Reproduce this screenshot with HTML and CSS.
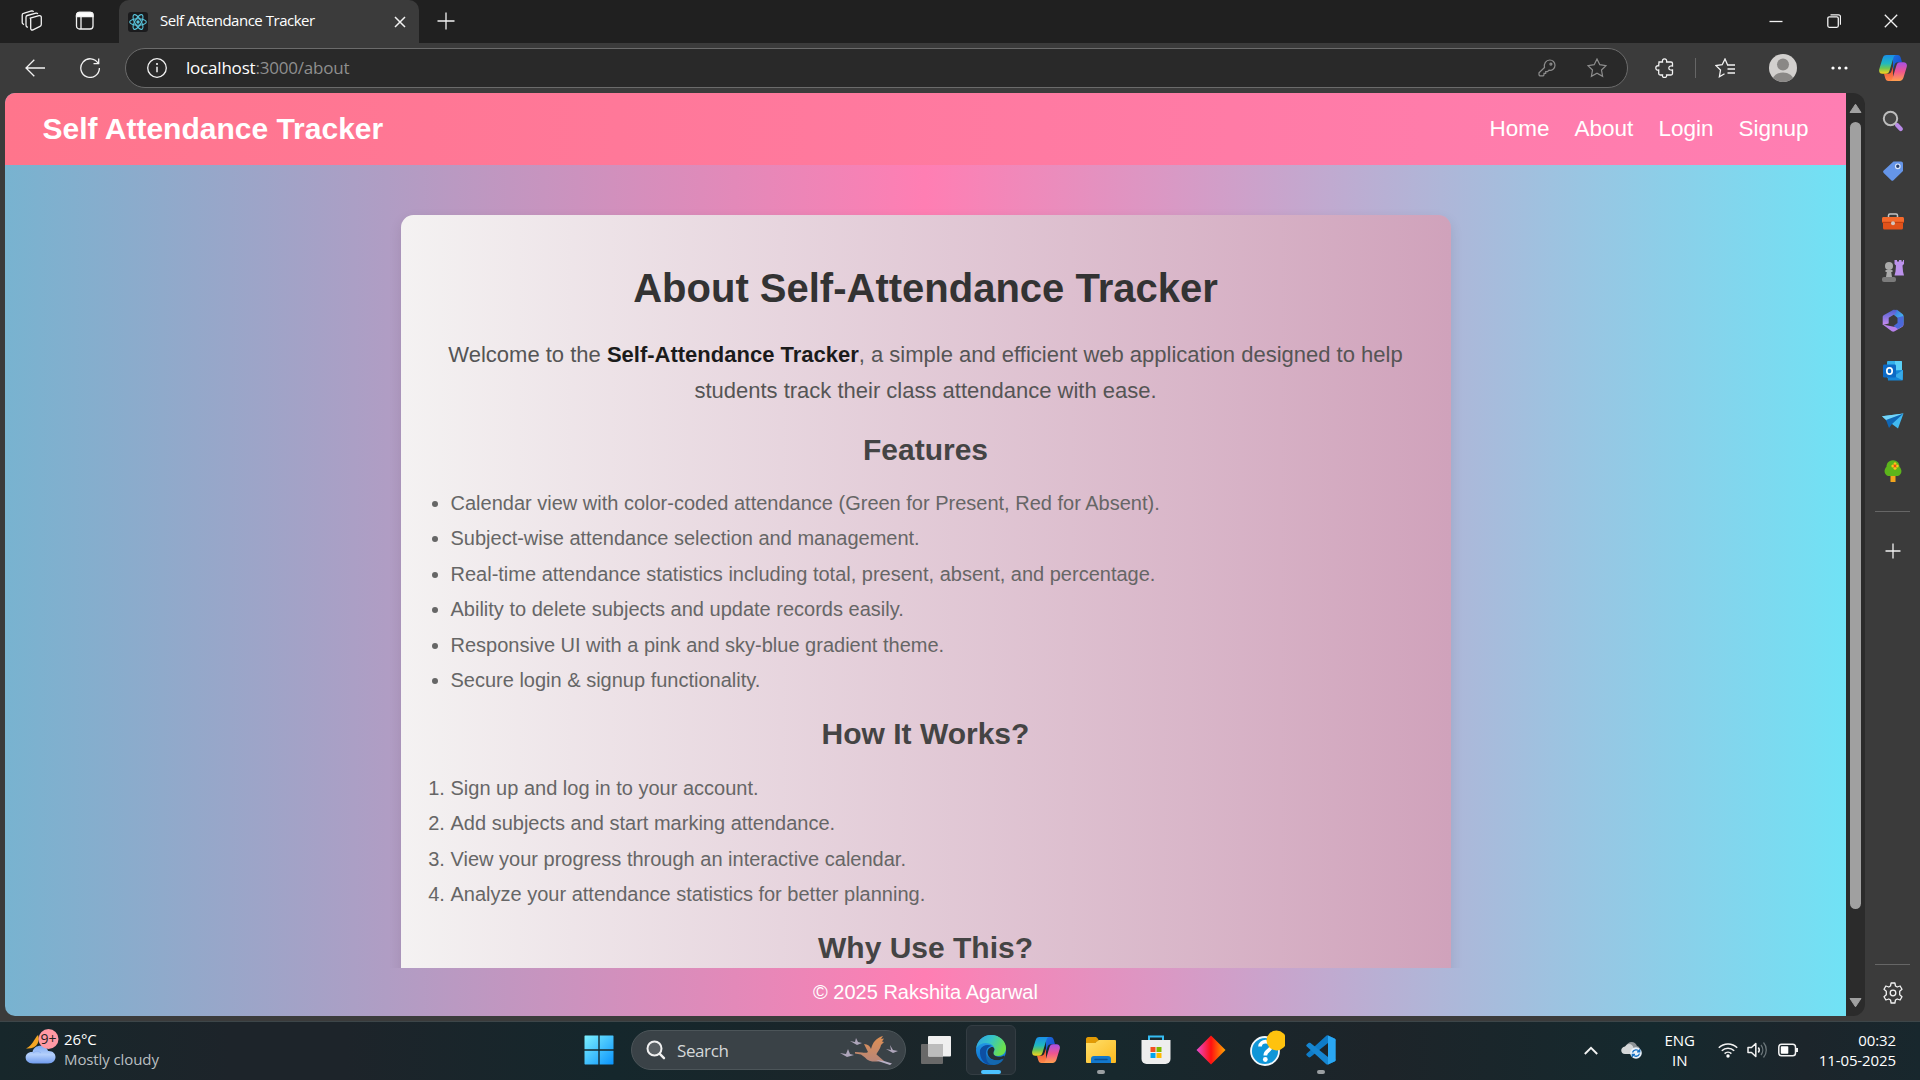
FILE: index.html
```html
<!DOCTYPE html>
<html lang="en">
<head>
<meta charset="utf-8">
<title>Self Attendance Tracker</title>
<link rel="stylesheet" href="styles.css">
</head>
<body>
<svg width="0" height="0" class="defs" aria-hidden="true">
  <defs>
    <linearGradient id="cpA" x1="0" y1="0" x2="0" y2="1"><stop offset="0" stop-color="#1a8fe8"/><stop offset=".45" stop-color="#20b8c0"/><stop offset=".7" stop-color="#6cc655"/><stop offset="1" stop-color="#ffd21c"/></linearGradient>
    <linearGradient id="cpB" x1="0" y1="0" x2="0" y2="1"><stop offset="0" stop-color="#a650e6"/><stop offset=".5" stop-color="#f0558f"/><stop offset="1" stop-color="#ffa04d"/></linearGradient>
    <linearGradient id="cpC" x1="0" y1="0" x2="1" y2="1"><stop offset="0" stop-color="#1b6fe0"/><stop offset="1" stop-color="#1747c9"/></linearGradient>
    <linearGradient id="cpD" x1="0" y1="0" x2="0" y2="1"><stop offset="0" stop-color="#e8402f"/><stop offset="1" stop-color="#ff8a4a"/></linearGradient>
    <linearGradient id="win" x1="0" y1="0" x2="1" y2="1"><stop offset="0" stop-color="#7cf0ff"/><stop offset="1" stop-color="#0a93fb"/></linearGradient>
    <linearGradient id="edgeG" x1="0" y1="0" x2="1" y2=".4"><stop offset="0" stop-color="#2f9fe6"/><stop offset=".5" stop-color="#35c3c8"/><stop offset="1" stop-color="#6be04c"/></linearGradient>
    <linearGradient id="edgeB" x1="0" y1="0" x2="0" y2="1"><stop offset="0" stop-color="#2aa5ea"/><stop offset="1" stop-color="#0b6dd0"/></linearGradient>
    <linearGradient id="dia" x1="0" y1="0" x2="1" y2="0"><stop offset="0" stop-color="#e84bd0"/><stop offset=".5" stop-color="#ff1010"/><stop offset="1" stop-color="#ffa800"/></linearGradient>
    <linearGradient id="fold" x1="0" y1="0" x2="1" y2="1"><stop offset="0" stop-color="#ffdf6b"/><stop offset="1" stop-color="#fcb91e"/></linearGradient>
    <linearGradient id="cloud" x1="0" y1="0" x2="0" y2="1"><stop offset="0" stop-color="#7fa9f2"/><stop offset=".5" stop-color="#b4d0fb"/><stop offset="1" stop-color="#6f9bee"/></linearGradient>
    <linearGradient id="hexA" x1="0" y1="0" x2="1" y2="1"><stop offset="0" stop-color="#3d63d8"/><stop offset="1" stop-color="#49d0f5"/></linearGradient>
    <linearGradient id="hexB" x1="0" y1="0" x2="0" y2="1"><stop offset="0" stop-color="#4c5fd0"/><stop offset="1" stop-color="#c98cf0"/></linearGradient>
    <linearGradient id="bird" x1="0" y1="0" x2="0" y2="1"><stop offset="0" stop-color="#e08f52"/><stop offset="1" stop-color="#b78678"/></linearGradient>
    <symbol id="copilot" viewBox="0 0 28 26">
      <path d="M14 0h4.500c2 0 2.700 1 3.300 3l1.200 4.200h-4c-2 0-3 1-3.600 3l-1.400 4.500z" fill="url(#cpC)"/>
      <path d="M14 26H9.500c-2 0-2.700-1-3.300-3L5 18.800h4c2 0 3-1 3.600-3l1.400-4.500z" fill="url(#cpD)"/>
      <path d="M7.500 0H17c-1.600.3-2.200 1.600-2.700 3.200l-3.800 12.600c-.6 2-1.600 3-3.600 3H3.500C.6 18.800-.4 16.300.3 14L3.500 3.400C4.200 1.200 5.400 0 7.500 0z" fill="url(#cpA)"/>
      <path d="M20.500 26H11c1.600-.3 2.200-1.600 2.700-3.200l3.800-12.600c.6-2 1.600-3 3.600-3h3.400c2.900 0 3.900 2.500 3.200 4.800l-3.200 10.600c-.7 2.200-1.900 3.400-4 3.400z" fill="url(#cpB)"/>
    </symbol>
  </defs>
</svg>

<header class="tabbar">
  <span class="slot tb-work"><svg width="22" height="22" viewBox="0 0 22 22" class="line"><path d="M9.300 8.200 18 5.700c1-.3 2 .2 2.300 1.200v7.400c0 1-.4 1.700-1.300 2.100l-7 3.400c-1.300.5-2.300 0-2.300-1.200V9.300zM6.800 17.500l-.9-.6c-.7-.4-.9-.9-.9-1.600V7.200c0-.8.500-1.500 1.300-1.700l8.700-2.300c.8-.2 1.400.1 1.800.8M3 14.600l-.9-.6c-.7-.4-.9-.9-.9-1.600V5.100c0-.8.500-1.500 1.300-1.700L10.600 1c.8-.2 1.500.1 1.900.9"/></svg></span>
  <span class="slot tb-tabs"><svg width="20" height="20" viewBox="0 0 20 20" class="line"><rect x="1.500" y="1.500" width="16.500" height="16.500" rx="3"/><path d="M6 5v13"/><path d="M1.500 5.500V4a2.500 2.500 0 0 1 2.500-2.500h11.500A2.500 2.500 0 0 1 18 4v1.500z" class="white"/></svg></span>
  <div class="tab">
    <svg width="20" height="20" viewBox="0 0 20 20" class="react"><rect width="20" height="20" rx="3" fill="#1b1b1d"/><g fill="none" stroke="#58c4dc" stroke-width="1.100"><ellipse cx="10" cy="10" rx="8.300" ry="3.200"/><ellipse cx="10" cy="10" rx="8.300" ry="3.200" transform="rotate(60 10 10)"/><ellipse cx="10" cy="10" rx="8.300" ry="3.200" transform="rotate(120 10 10)"/></g><circle cx="10" cy="10" r="1.700" fill="#58c4dc"/></svg>
    <span class="tab-title">Self Attendance Tracker</span>
    <svg width="12" height="12" viewBox="0 0 12 12" class="line"><path d="m1 1 10 10M11 1 1 11" stroke-width="1.500"/></svg>
  </div>
  <span class="slot tb-new"><svg width="18" height="18" viewBox="0 0 18 18" class="line"><path d="M9 .5v17M.5 9h17"/></svg></span>
  <div class="winbtns">
    <span class="slot"><svg width="14" height="14" viewBox="0 0 14 14" class="line"><path d="M.5 7.500h13"/></svg></span>
    <span class="slot"><svg width="14" height="14" viewBox="0 0 14 14" class="line"><rect x=".8" y="2.800" width="10.500" height="10.500" rx="1.500"/><path d="M3.500.8h8a2 2 0 0 1 2 2v8"/></svg></span>
    <span class="slot"><svg width="14" height="14" viewBox="0 0 14 14" class="line"><path d="m.8.800 12.400 12.400M13.200.8.800 13.200"/></svg></span>
  </div>
</header>

<div class="toolbar">
  <span class="slot nav-back"><svg width="20" height="18" viewBox="0 0 20 18" class="line"><path d="M20 9H1M9.300.7 1 9l8.300 8.300"/></svg></span>
  <span class="slot nav-reload"><svg width="20" height="20" viewBox="0 0 20 20" class="line"><path d="M18.200 5.500A9.300 9.300 0 1 0 19.400 10M18.700.5v5.200h-5.200"/></svg></span>
  <div class="address">
    <svg width="20" height="20" viewBox="0 0 20 20" class="line"><circle cx="10" cy="10" r="9.300"/><path d="M10 8.800v5.400" stroke-width="1.500"/><circle cx="10" cy="6" r="1" class="white" stroke="none"/></svg>
    <span class="url"><b>localhost</b>:3000/about</span>
    <svg width="18" height="18" viewBox="0 0 18 18" class="dim key"><path d="M6.500 8.500C5.700 4.800 7.800 1 11.800 1A5.200 5.200 0 0 1 17 6.200c0 3.600-3 5.600-6 5L9.400 12.700H7.700v1.700H6v1.500l-.8.900H1.800l-.8-.9v-2.200z"/><circle cx="12.900" cy="5.100" r="1"/></svg>
    <svg width="20" height="20" viewBox="0 0 20 20" class="dim"><path d="m10 1 2.800 5.700 6.200.9-4.500 4.400 1.100 6.300L10 15.300l-5.600 3 1.100-6.300L1 7.600l6.200-.9z"/></svg>
  </div>
  <div class="tools">
    <svg width="20" height="20" viewBox="0 0 20 20" class="line t-ext"><path d="M4 4h3.500C7.200 2 8 .8 9.500.8S11.900 2 11.600 4H16c1 0 1.500.5 1.500 1.500V8c-2-.4-3.700.3-3.700 2s1.700 2.400 3.700 2v3.500c0 1-.5 1.500-1.500 1.500h-4.400c.3 1.500-.5 2.500-2.100 2.500S7.200 18.500 7.500 17H5.200C4.200 17 3.700 16.500 3.700 15.500V12C2 12.300.8 11.500.8 9.900S2 7.500 3.700 7.800z"/></svg>
    <i class="sep"></i>
    <svg width="20" height="20" viewBox="0 0 20 20" class="line t-fav"><path d="M12.500 6.700 10 1 7.200 6.700 1 7.600l4.500 4.400-1.100 6.700 5.100-3M12 7h8M12.500 11h7.500M12.500 15h7.500"/></svg>
    <svg width="28" height="28" viewBox="0 0 28 28" class="t-user"><defs><clipPath id="pc"><circle cx="14" cy="14" r="14"/></clipPath></defs><circle cx="14" cy="14" r="14" fill="#d2d0ce"/><g clip-path="url(#pc)" fill="#8a8886"><circle cx="14" cy="10.500" r="6"/><ellipse cx="14" cy="26" rx="10.500" ry="7.500"/></g></svg>
    <svg width="17" height="4" viewBox="0 0 17 4" class="t-more"><g fill="#fff"><circle cx="2" cy="2" r="1.600"/><circle cx="8.500" cy="2" r="1.600"/><circle cx="15" cy="2" r="1.600"/></g></svg>
    <svg width="28" height="26"><use href="#copilot"/></svg>
  </div>
</div>

<div class="content">
  <div class="page">
    <nav class="navbar">
      <div class="brand">Self Attendance Tracker</div>
      <div class="links"><a>Home</a><a>About</a><a>Login</a><a>Signup</a></div>
    </nav>
    <main class="main">
      <article class="card">
        <h1>About Self-Attendance Tracker</h1>
        <p>Welcome to the <strong>Self-Attendance Tracker</strong>, a simple and efficient web application designed to help students track their class attendance with ease.</p>
        <h2>Features</h2>
        <ul>
          <li>Calendar view with color-coded attendance (Green for Present, Red for Absent).</li>
          <li>Subject-wise attendance selection and management.</li>
          <li>Real-time attendance statistics including total, present, absent, and percentage.</li>
          <li>Ability to delete subjects and update records easily.</li>
          <li>Responsive UI with a pink and sky-blue gradient theme.</li>
          <li>Secure login &amp; signup functionality.</li>
        </ul>
        <h2>How It Works?</h2>
        <ol>
          <li>Sign up and log in to your account.</li>
          <li>Add subjects and start marking attendance.</li>
          <li>View your progress through an interactive calendar.</li>
          <li>Analyze your attendance statistics for better planning.</li>
        </ol>
        <h2>Why Use This?</h2>
      </article>
    </main>
    <footer class="footer">© 2025 Rakshita Agarwal</footer>
  </div>
  <div class="scrollbar">
    <svg width="13" height="11" viewBox="0 0 13 11"><path d="M6.500 1.200 12 9.500H1z" fill="#a0a0a0" stroke="#a0a0a0" stroke-linejoin="round"/></svg>
    <i class="thumb"></i>
    <svg width="13" height="11" viewBox="0 0 13 11"><path d="M6.500 9.800 12 1.500H1z" fill="#a0a0a0" stroke="#a0a0a0" stroke-linejoin="round"/></svg>
  </div>
  <aside class="side">
    <span class="app"><svg width="22" height="22" viewBox="0 0 22 22"><path d="m15 15 3.800 4" stroke="#b98ae8" stroke-width="4.200" stroke-linecap="round"/><circle cx="8.500" cy="8.500" r="6.700" fill="#454545" stroke="#bdbdbd" stroke-width="2"/></svg></span>
    <span class="app"><svg width="22" height="22" viewBox="0 0 22 22"><path d="M11.500 1.500H19a2 2 0 0 1 2 2V11L11.500 20.300c-.8.700-1.600.7-2.300 0L1.700 13c-.8-.8-.8-1.600 0-2.400z" fill="#6595e8"/><circle cx="15.800" cy="6.300" r="2.300" fill="#27406e" stroke="#dce8fb" stroke-width="1.200"/></svg></span>
    <span class="app"><svg width="22" height="22" viewBox="0 0 22 22"><path d="M6.500 7.500v-2c0-1 .5-1.500 1.500-1.500h6c1 0 1.500.5 1.500 1.500v2" fill="none" stroke="#c5c5c5" stroke-width="1.500"/><path d="M1 9.500h20V18a1.500 1.500 0 0 1-1.500 1.500h-17A1.500 1.500 0 0 1 1 18z" fill="#e0521a"/><path d="M0 8.500C0 7.600.6 7 1.500 7h19c.9 0 1.500.6 1.500 1.500v4H0z" fill="#f4692b"/><path d="M0 12.300h22" stroke="#b83c10"/><circle cx="11" cy="13.300" r="2" fill="#d2c5bd"/></svg></span>
    <span class="app"><svg width="22" height="22" viewBox="0 0 22 22"><path d="M12.500 0H15v1.500h2V0h2.500v1.500H21V0h1v4l-1.500 1.500.5 6 1 4h-9.500l1-4 .5-6L12.500 4z" fill="#bc92ec"/><g fill="#aaa"><circle cx="7" cy="6" r="4"/><path d="M3.500 10h7v2H9.200l.8 5H4l.8-5H3.500z"/></g><rect y="17" width="14" height="5" rx="2" fill="#7b7b7b"/></svg></span>
    <span class="app"><svg width="22" height="24" viewBox="0 0 22 24"><path d="M10 2 15 .8l5.500 4.200c.7.500 1 1.200 1 2v6.500L12 6z" fill="url(#hexA)"/><path d="M11.500.8 2 6C1 6.700.7 7.300.7 8v8l6-1.500V8.800L13 5l2-4z" fill="url(#hexB)"/><path d="m.7 15.500 9 6.800c1 .6 2 .6 3 0L20 18c1-.7 1.500-1.500 1.500-2.500V13L13 18z" fill="#b780ea"/><path d="m21.500 7-6 1.500V14l-4 3 4.500 3 4.500-2.700c.7-.5 1-1.200 1-2z" fill="#4a69d9"/></svg></span>
    <span class="app"><svg width="20" height="20" viewBox="0 0 20 20"><rect x="4" width="15" height="17" rx="1" fill="#35b0ea"/><path d="M12 0h6a1 1 0 0 1 1 1v8h-7z" fill="#5ad0f7"/><path d="M4 10.500 20 9v9a1.500 1.500 0 0 1-1.500 1.500H5z" fill="#1485d8"/><path d="m20 9-9 6 8.500 4.300z" fill="#38aae8"/><rect y="3.500" width="13" height="13" rx="1.200" fill="#0d6ac5"/><ellipse cx="6.500" cy="10" rx="2.700" ry="3.200" fill="none" stroke="#fff" stroke-width="1.700"/></svg></span>
    <span class="app"><svg width="22" height="16" viewBox="0 0 22 16"><path d="M0 3.200 21.500.5 16 15.500 10 11z" fill="#41b9f0"/><path d="M0 3.200 21.500.5 6 9z" fill="#73d5fa"/><path d="M4 7 21.500.5 10 11l-3 4z" fill="#1067b5"/></svg></span>
    <span class="app"><svg width="18" height="22" viewBox="0 0 18 22"><rect x="6.500" y="14" width="5" height="8" fill="#f3a51c"/><path d="M9 .3c5 0 6.500 4 6.500 6.500 3 3 2.500 8-1.500 9.200H4C0 14.800-.5 9.800 2.500 6.800 2.500 4.300 4 .3 9 .3z" fill="#5cb51b"/><g fill="#ffc21a"><circle cx="11" cy="3.800" r="1.500"/><circle cx="11" cy="8.200" r="1.500"/><circle cx="8.800" cy="6" r="1.500"/><circle cx="13.200" cy="6" r="1.500"/></g><circle cx="11" cy="6" r="1.400" fill="#ec4f12"/></svg></span>
    <i class="rule"></i>
    <span class="app add"><svg width="16" height="16" viewBox="0 0 16 16" class="line"><path d="M8 .5v15M.5 8h15"/></svg></span>
    <i class="rule low"></i>
    <span class="app gear"><svg width="22" height="22" viewBox="0 0 22 22" class="line"><path d="m9.100 1-.6 3-1.700 1-2.900-1L2 7.300l2.300 2v3.400l-2.300 2L3.900 18l2.900-1 1.700 1 .6 3h3.800l.6-3 1.700-1 2.900 1 1.900-3.300-2.300-2V9.300l2.300-2L18.100 4l-2.900 1-1.700-1-.6-3z" stroke-linejoin="round"/><circle cx="11" cy="11" r="2.800"/></svg></span>
  </aside>
</div>

<div class="taskbar">
  <div class="weather">
    <svg width="36" height="38" viewBox="0 0 36 38"><path d="M14 7c2.500 5.500-.5 14.500-12 13.500C8.500 17.500 10 11 14 7z" fill="#f5a623"/><path d="M9 35.500c-10 0-9.500-12-.5-11.500 1.500-8.500 14-8 15.500-1 10-.5 10 12.500 0 12.500z" fill="url(#cloud)"/><path d="M9 25c3-2.500 6-2 8 0" stroke="#8fb4f5" fill="none"/><circle cx="24.500" cy="11" r="10" fill="#ff99a4"/><text x="24.500" y="16" text-anchor="middle" class="badge-text">9+</text></svg>
    <div class="two"><span>26°C</span><span class="muted">Mostly cloudy</span></div>
  </div>
  <div class="center">
    <span class="task"><svg width="30" height="30" viewBox="0 0 30 30"><path d="M1 .5h13.300v13.700H.5V1zM15.700.5H29l.5.500v13.200H15.700zM.5 15.700h13.800v13.800H1l-.5-.5zM15.700 15.700h13.800V29l-.5.500H15.700z" fill="url(#win)"/></svg></span>
    <div class="search">
      <svg width="20" height="20" viewBox="0 0 20 20"><circle cx="8.500" cy="8.500" r="7" fill="#5a6064" stroke="#f0f0f0" stroke-width="2"/><path d="m13.800 13.800 4.200 4.400" stroke="#f0f0f0" stroke-width="2.400" stroke-linecap="round"/></svg>
      <span>Search</span>
      <svg width="60" height="32" viewBox="0 0 60 32"><path d="m17 18 7 .5c3 .5 4.500.5 6-.5l-4-8c4 .5 6 2 7 5 2-7 5-11 12-13l-2 3 3-.5-2 3 2 .5-3 3c-1 5-4 7-4.500 9.500L46 27l-6 .5c-6 .5-10-.5-13-4l-4-3-6-1z" fill="url(#bird)"/><path d="m38 26 8 1 8 2.500-2 1.500-9-3z" fill="#b9b0c6"/><g fill="#aea5ba"><path d="m12 7 5 1 1-4 2 4 4 1-5 2z"/><path d="m2 19 6 1 2-5 2 5 4 1-7 2z"/><path d="m48 15 5 1-1-5 3 5 5 1-5 2z"/></g></svg>
    </div>
    <span class="task"><svg width="32" height="30" viewBox="0 0 32 30"><rect x="1" y="9" width="22" height="20" rx="1" fill="#696969"/><rect x="8" y="1" width="23" height="20.500" rx="1" fill="#f0f0f0"/><path d="M8 9h15v12.500H9l-1-1z" fill="#bcbcbc"/></svg></span>
    <span class="task active"><svg width="30" height="30" viewBox="0 0 30 30"><circle cx="15" cy="15" r="15" fill="url(#edgeB)"/><path d="M10 19c0-5 2-7.500 6-8-4-2-10-1-12 4C3 24 9 30 16 30c5 0 9-2.500 11.500-6C21 27 11 27 10 19z" fill="#0d4fa3"/><path d="M.3 13C1.300 5.500 7.500 0 15 0c9 0 15 6.500 15 13 0 5-3.500 8-8 8-3 0-5-1.500-5-2.500s1.500-1.500 1.500-4C18.500 8 6 4.500.3 13z" fill="url(#edgeG)"/><path d="M17.500 18c0 4 7 5 10.500 2.500 1 0 1 1-.5 3C22 27 12 25.500 11.500 17.500c0-4 4-6.500 6-5 2 2 0 3.500 0 5.500z" fill="#252f37"/><path d="M10 19c2 6 11 8 17.500 5-4 7-12 7-15 4-2-2-3-6-2.500-9z" fill="#1468ae"/></svg><i class="run on"></i></span>
    <span class="task"><svg width="28" height="26"><use href="#copilot"/></svg></span>
    <span class="task"><svg width="30" height="28" viewBox="0 0 30 28"><path d="M0 3c0-1 .8-2 2-2h7c1.500 0 2 .5 3 2l1 2-4 2H0z" fill="#e29a05"/><path d="M0 7h9l4-3h16a1 1 0 0 1 1 1v21a1 1 0 0 1-1 1H1a1 1 0 0 1-1-1z" fill="url(#fold)"/><path d="M5 27v-4a3 3 0 0 1 3-3h14a3 3 0 0 1 3 3v4z" fill="#1378cc"/><path d="M9 23.500h12" stroke="#0b4f94" stroke-width="1.500" stroke-linecap="round"/></svg><i class="run"></i></span>
    <span class="task"><svg width="30" height="30" viewBox="0 0 30 30"><path d="M8 5V1.500h14V5" fill="none" stroke="#35bdf3" stroke-width="2"/><path d="M.5 5h29v19a5 5 0 0 1-5 5h-19a5 5 0 0 1-5-5z" fill="#eee"/><path d="M9.500 12h5v5h-5z" fill="#f25022"/><path d="M15.500 12h5v5h-5z" fill="#7fba00"/><path d="M9.500 18h5v5h-5z" fill="#00a4ef"/><path d="M15.500 18h5v5h-5z" fill="#ffb900"/></svg></span>
    <span class="task"><svg width="30" height="30" viewBox="0 0 30 30"><path d="m15 .5 14.500 14.500L15 29.500.500 15z" fill="url(#dia)"/></svg></span>
    <span class="task help"><svg width="38" height="38" viewBox="0 0 38 38"><circle cx="18" cy="21" r="14" fill="#0f96d8" stroke="#f2f7fa" stroke-width="1.800"/><path d="M13 16.500c.3-6.500 11-6.300 11 0 0 4-5.700 4.200-5.700 9" fill="none" stroke="#fff" stroke-width="3.700"/><circle cx="18.300" cy="29.500" r="2.400" fill="#fff"/><circle cx="29.500" cy="10.500" r="10" fill="#ffc20e"/></svg></span>
    <span class="task"><svg width="30" height="30" viewBox="0 0 30 30"><path d="m22 .5 6.500 3c.8.500 1.200 1 1.200 2L22 8 4.500 22c-.7.500-1.300.5-2 0L.8 20.600c-.7-.7-.7-1.400 0-2L20 1c.6-.6 1.200-.8 2-.5z" fill="#0f7cc8"/><path d="m22 29.500 6.500-3c.8-.5 1.200-1 1.200-2L22 22 4.500 8c-.7-.5-1.300-.5-2 0L.8 9.400c-.7.700-.7 1.400 0 2L20 29c.6.600 1.200.8 2 .5z" fill="#1686d2"/><path d="M22 .5 28.500 3.500c.8.400 1.200 1 1.200 2v19c0 1-.4 1.600-1.200 2L22 29.500z" fill="#2aa7f3"/></svg><i class="run"></i></span>
  </div>
  <div class="tray">
    <svg width="14" height="9" viewBox="0 0 14 9" class="line chev"><path d="m.8 8 6.200-6.200L13.200 8" stroke-width="1.900"/></svg>
    <svg width="22" height="20" viewBox="0 0 22 20" class="sync"><path d="M5 7C6 1 14 0 16 6c4 1 4 7 0 7H9z" fill="#8d9396"/><path d="M4 14c-5 0-5-7 0-7.500C7 2 12 4 12.500 8l2 6z" fill="#d4d7d8"/><circle cx="15" cy="13" r="5.800" fill="#e8f1fa"/><path d="M11.500 12.500c.8-3 5.200-3.500 6.800-.8M18.700 9.200v2.700H16M18.500 13.700c-.8 3-5.200 3.500-6.800.8M11.300 17v-2.700H14" fill="none" stroke="#1672c4" stroke-width="1.300"/></svg>
    <div class="two lang"><span>ENG</span><span>IN</span></div>
    <svg width="20" height="16" viewBox="0 0 20 16" class="line wifi"><path d="M.8 5.800a13 13 0 0 1 18.400 0M3.800 8.800a8.800 8.800 0 0 1 12.400 0M6.600 11.600a4.900 4.900 0 0 1 6.800 0" stroke-width="1.600"/><circle cx="10" cy="14" r="1.700" class="white" stroke="none"/></svg>
    <svg width="20" height="18" viewBox="0 0 20 18" class="line vol"><path d="M1 6.500v5h3.500l4.300 4V2.500l-4.300 4zM11.300 6.500a4 4 0 0 1 0 5" stroke-width="1.500" stroke-linejoin="round"/><path d="M14 4a8 8 0 0 1 0 10M16.500 1.500a11.500 11.500 0 0 1 0 15" stroke="#6b7579"/></svg>
    <svg width="20" height="14" viewBox="0 0 20 14" class="line bat"><rect x=".8" y="1.200" width="16.700" height="11.600" rx="2.800" stroke-width="1.500"/><rect x="2.800" y="3.200" width="7.500" height="7.600" rx=".8" class="white" stroke="none"/><path d="M19 5v4" stroke-width="2"/></svg>
    <div class="two clock"><span>00:32</span><span>11-05-2025</span></div>
  </div>
</div>
</body>
</html>
```
FILE: styles.css
```css
* { box-sizing: border-box; }
html, body { margin: 0; height: 100%; overflow: hidden; }
body {
  display: flex;
  flex-direction: column;
  background: #3b3b3b;
  font-family: "Open Sans", "Noto Sans", sans-serif;
  color: #fff;
}
svg { display: block; flex: none; }
.defs { position: absolute; }
.line { fill: none; stroke: #f2f2f2; stroke-width: 1.3; }
.dim { fill: none; stroke: #8d8d8d; stroke-width: 1.2; }
.white { fill: #fff; }
.slot { display: flex; align-items: center; justify-content: center; flex: none; }

/* Browser tab strip */
.tabbar { display: flex; height: 43px; flex: none; background: #202020; }
.tabbar .slot { padding-bottom: 1px; }
.tb-work { width: 64px; }
.tb-tabs { width: 42px; }
.tab {
  display: flex;
  align-items: center;
  width: 300px;
  margin-left: 13px;
  padding: 0 13px 0 9px;
  background: #3b3b3b;
  border-radius: 10px 10px 0 0;
}
.react { margin-right: 12px; }
.tab-title { flex: 1; padding-bottom: 3px; font-size: 15px; letter-spacing: -0.48px; white-space: nowrap; }
.tb-new { width: 53px; }
.winbtns { display: flex; margin-left: auto; }
.winbtns .slot { width: 57.500px; }

/* Toolbar */
.toolbar { display: flex; height: 50px; flex: none; align-items: center; }
.nav-back { width: 70px; }
.nav-reload { width: 40px; }
.address {
  display: flex;
  align-items: center;
  width: 1503px;
  height: 40px;
  margin: 0 0 1px 15px;
  padding: 0 20px 0 21px;
  background: #292929;
  border: 1px solid #6b6b6b;
  border-radius: 20px;
}
.url { flex: 1; margin-left: 19px; font-size: 17px; letter-spacing: -0.2px; color: #8f8f8f; }
.url b { font-weight: 400; color: #fff; }
.key { margin-right: 31px; }
.tools { display: flex; align-items: center; padding-left: 27px; }
.sep { width: 1px; height: 20px; margin: 0 19px 0 20px; background: #666; }
.t-fav { margin-right: 34px; }
.t-user { margin-right: 34px; }
.t-more { margin-right: 31px; }

/* Viewport */
.content { display: flex; flex: 1; min-height: 0; padding: 0 0 5px 5px; }
.page {
  display: flex;
  flex-direction: column;
  width: 1841px;
  flex: none;
  overflow: hidden;
  border-radius: 10px 0 0 10px;
  background: linear-gradient(to right, #78b3d0, #ff7eb3 50%, #70e2f5);
  font-family: "Liberation Sans", Arial, sans-serif;
}
.navbar {
  display: flex;
  align-items: center;
  justify-content: space-between;
  height: 72px;
  flex: none;
  padding: 0 37.500px;
  background: linear-gradient(to right, #ff758c, #ff7eb3);
}
.brand { font-size: 30px; font-weight: 700; }
.links { display: flex; gap: 25px; padding-bottom: 1px; font-size: 22.500px; }
.main { flex: 1; min-height: 0; overflow: hidden; padding-top: 50px; }
.card {
  width: 1050px;
  height: 1000px;
  margin: 0 auto;
  padding: 25px;
  border-radius: 12.500px;
  background: linear-gradient(to right, #f4f2f2, #d0a2bb);
  box-shadow: 0 5px 12.500px rgba(0, 0, 0, 0.1);
}
.card h1 { margin: 25.500px 0 26.800px; font-size: 40px; line-height: 45px; text-align: center; color: #333; }
.card p { margin: 0; font-size: 22px; line-height: 35.200px; text-align: center; color: #555; }
.card strong { color: #1b1b1b; }
.card h2 { margin: 24.900px 0; font-size: 30px; line-height: 34.500px; text-align: center; color: #444; }
.card ul, .card ol { margin: 0; padding-left: 25px; font-size: 20px; line-height: 23px; color: #666; }
.card li { margin-bottom: 12.500px; }
.footer { height: 48px; flex: none; font-size: 20px; line-height: 48px; text-align: center; }

.scrollbar {
  display: flex;
  flex-direction: column;
  align-items: center;
  width: 19px;
  flex: none;
  padding: 10px 0 8px;
  background: #2b2b2b;
  border-radius: 0 12px 12px 0;
}
.thumb { width: 11px; height: 787px; margin: 8px 0 auto; border-radius: 6px; background: #a0a0a0; }

/* Edge sidebar */
.side { display: flex; flex-direction: column; align-items: center; flex: 1; padding-top: 3px; }
.app { display: flex; align-items: center; justify-content: center; height: 50px; flex: none; }
.rule { width: 35px; height: 1px; flex: none; margin-top: 15px; background: #666; }
.add { margin-top: 14px; }
.low { margin-top: auto; }
.gear { height: 56px; margin-bottom: -5px; }

/* Taskbar */
.taskbar {
  display: grid;
  grid-template-columns: 1fr auto 1fr;
  align-items: center;
  height: 59px;
  flex: none;
  padding-bottom: 2px;
  border-top: 1px solid #3d4649;
  background: linear-gradient(to right, #17272b, #1d242a 12%, #1d242a 18%, #15272c 32%, #1b2529 45%, #17282d 58%, #1d2429 72%, #15292e 86%, #1c252b 94%, #18272d);
}
.weather { display: flex; align-items: center; padding: 0 0 6px 24px; }
.two { display: flex; flex-direction: column; font-size: 15px; line-height: 20px; letter-spacing: -0.1px; white-space: nowrap; }
.weather .two { margin: 3px 0 0 4px; }
.muted { color: #b9bfc1; }
.badge-text { font-size: 14px; fill: #222; }
.center { display: flex; align-items: center; height: 56px; }
.task { position: relative; display: flex; align-items: center; justify-content: center; width: 55px; height: 50px; }
.active { width: 50px; margin: 0 2.500px; border: 1px solid #343d43; border-radius: 6px; background: #263036; }
.help { padding-bottom: 2px; }
.run { position: absolute; bottom: 1px; left: calc(50% - 4px); width: 8px; height: 4px; border-radius: 2px; background: #9a9fa2; }
.run.on { bottom: 0; left: calc(50% - 10px); width: 20px; background: #4cc2ff; }
.search {
  display: flex;
  align-items: center;
  width: 275px;
  height: 40px;
  margin: 0 2.500px 0 4.500px;
  padding: 0 7px 0 14px;
  border: 1px solid #4c5559;
  border-radius: 20px;
  background: #3a4247;
}
.search span { flex: 1; margin-left: 11px; font-size: 17px; letter-spacing: -0.4px; color: #d5d8d9; }
.tray { display: flex; align-items: center; justify-content: flex-end; padding-right: 24px; }
.chev { margin-right: 23px; }
.sync { margin-right: 22px; }
.lang { width: 30px; margin-right: 23px; align-items: center; }
.wifi { margin-right: 9px; }
.vol { margin-right: 11px; }
.bat { margin-right: 21px; }
.clock { align-items: flex-end; }
```
